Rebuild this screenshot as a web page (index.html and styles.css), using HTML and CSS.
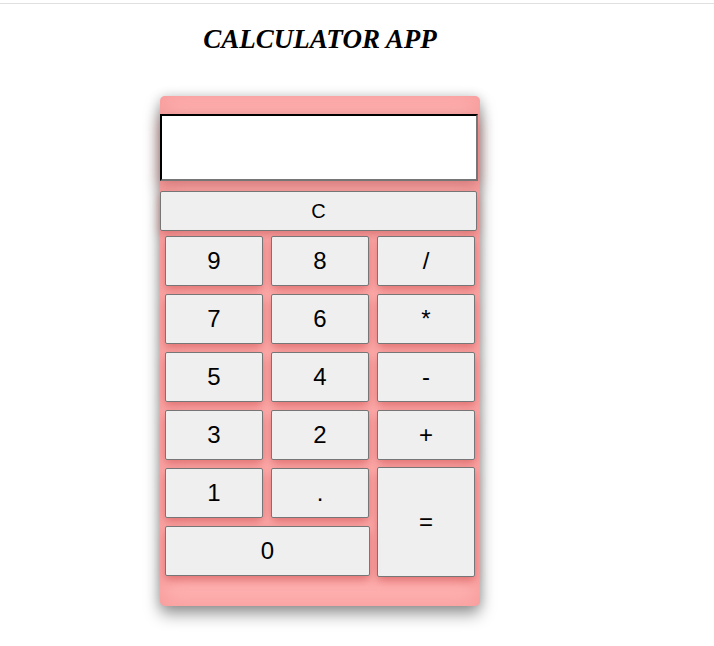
FILE: index.html
```html
<!DOCTYPE html>
<html>
<head>
<meta charset="utf-8">
<link rel="stylesheet" href="styles.css">
</head>
<body>
<div class="topline"></div>
<div class="wrap">
  <h1 class="title">CALCULATOR APP</h1>
  <div class="calc">
    <input class="display" type="text" value="">
    <button class="clear">C</button>
    <div class="keys">
      <button class="key">9</button>
      <button class="key">8</button>
      <button class="key">/</button>
      <button class="key">7</button>
      <button class="key">6</button>
      <button class="key">*</button>
      <button class="key">5</button>
      <button class="key">4</button>
      <button class="key">-</button>
      <button class="key">3</button>
      <button class="key">2</button>
      <button class="key">+</button>
      <button class="key">1</button>
      <button class="key">.</button>
      <button class="key equals">=</button>
      <button class="key zero">0</button>
    </div>
  </div>
</div>
</body>
</html>
```
FILE: styles.css
```css
html, body { margin: 0; padding: 0; background: #fff; }
body { font-family: "Liberation Serif", serif; padding-bottom: 30px; }
.topline { height: 1px; background: #e0e0e0; margin-top: 3px; }
.wrap { width: 320px; margin-left: 160px; }
.title {
  margin: 20px 0 0 0;
  text-align: center;
  font-size: 27px;
  font-style: italic;
  font-weight: bold;
  line-height: 30px;
  height: 30px;
}
.calc {
  margin-top: 42px;
  width: 320px;
  height: 510px;
  box-sizing: border-box;
  padding-top: 18px;
  background: #ffb1b1;
  border-radius: 5px;
  box-shadow: 0 8px 16px rgba(0,0,0,0.4), 0 0 12px rgba(0,0,0,0.15), inset 0 0 24px rgba(220,80,80,0.25);
  display: flex;
  flex-direction: column;
  align-items: flex-start;
}
.display {
  width: 318px;
  height: 67px;
  box-sizing: border-box;
  margin: 0;
  border: 2px inset #767676;
  border-top-color: #222;
  border-left-color: #222;
  background: #fff;
  font-size: 24px;
  box-shadow: 0 5px 14px rgba(150,40,40,0.45);
  outline: none;
}
button {
  font-family: "Liberation Sans", Arial, sans-serif;
  background: #efefef;
  border: 1px solid #767676;
  border-radius: 2px;
  color: #000;
  padding: 0;
  margin: 0;
}
.clear {
  margin-top: 10px;
  width: 317px;
  height: 40px;
  font-size: 20px;
  box-shadow: 0 4px 10px rgba(190,60,60,0.5);
}
.keys {
  margin-top: 5px;
  margin-left: 5px;
  display: grid;
  grid-template-columns: 98px 98px 98px;
  grid-auto-rows: 50px;
  column-gap: 8px;
  row-gap: 8px;
}
.key {
  font-size: 24px;
  box-shadow: 0 4px 10px rgba(200,60,60,0.55);
}
.zero { grid-column: 1 / span 2; width: 205px; }
.equals { grid-column: 3; grid-row: 5 / span 2; height: 110px; margin-top: -1px; }
```
